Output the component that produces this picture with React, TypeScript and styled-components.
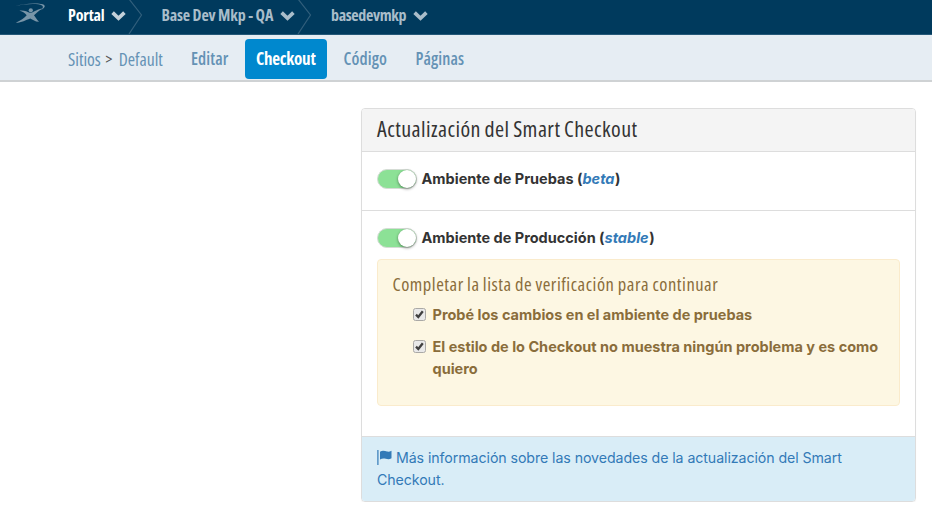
import React from "react";
import styled, { createGlobalStyle } from "styled-components";

const condensed = `font-family: "Open Sans", sans-serif; font-stretch: 75%;`;

const GlobalStyle = createGlobalStyle`
  * { box-sizing: border-box; }
  body {
    margin: 0;
    background: #fff;
    color: #333;
    font-family: Inter, "Liberation Sans", sans-serif;
    font-size: 14.5px;
    line-height: 22px;
  }
`;

const TopBar = styled.header`
  display: flex;
  height: 35px;
  background: #003a5d;
  border-bottom: 1px solid #245878;
`;

const LogoLink = styled.a`
  display: block;
  width: 68px;
  padding-left: 15px;
  svg { display: block; }
`;

const Crumb = styled.div<{ $active?: boolean; $width: number }>`
  ${condensed}
  display: flex;
  width: ${(p) => p.$width}px;
  height: 34px;
  white-space: nowrap;
  font-size: 16px;
  font-weight: 700;
  line-height: 31px;
  color: ${(p) => (p.$active ? "#fff" : "#a9bdca")};
`;

const CrumbText = styled.span<{ $width: number; $spacing: number }>`
  flex: none;
  width: ${(p) => p.$width}px;
  letter-spacing: ${(p) => p.$spacing}px;
`;

const Chevron = styled.svg`
  flex: none;
  width: 15px;
  height: 10px;
  margin: 11px 0 0 6px;
`;

const Separator = styled.svg`
  flex: none;
  width: 15px;
  height: 34px;
  margin-left: 2px;
`;

const SubBar = styled.nav`
  ${condensed}
  display: flex;
  height: 47px;
  padding: 4px 0 0 68px;
  background: #e6edf3;
  border-bottom: 2px solid #cfd2d4;
  font-size: 17px;
  line-height: 40px;
  white-space: nowrap;
`;

const Path = styled.div`
  display: flex;
  width: 112px;
  color: #6492b5;
  font-size: 17.7px;
`;

const PathPart = styled.span<{ $width: number; $dark?: boolean }>`
  flex: none;
  width: ${(p) => p.$width}px;
  ${(p) => p.$dark && "color: #555; font-size: 16px;"}
`;

const Tab = styled.a<{ $width: number; $active?: boolean }>`
  width: ${(p) => p.$width}px;
  height: 40px;
  margin-right: ${(p) => (p.$active ? 5.5 : 0)}px;
  padding-left: 11px;
  border-radius: 4px;
  font-weight: ${(p) => (p.$active ? 700 : 600)};
  letter-spacing: ${(p) => (p.$active ? -0.25 : 0.1)}px;
  color: ${(p) => (p.$active ? "#fff" : "#6492b5")};
  background: ${(p) => (p.$active ? "#0088ce" : "transparent")};
`;

const Panel = styled.section`
  width: 555px;
  height: 394px;
  margin: 26px 0 0 361px;
  overflow: hidden;
  border: 1px solid #ddd;
  border-radius: 4px;
  box-shadow: 0 1px 1px rgba(0, 0, 0, 0.05);
`;

const PanelHeading = styled.h1`
  ${condensed}
  height: 43px;
  margin: 0;
  padding-left: 15px;
  border-bottom: 1px solid #ddd;
  background: #f4f4f4;
  font-size: 22px;
  font-weight: 400;
  line-height: 39px;
  letter-spacing: 0.44px;
  word-spacing: -0.9px;
`;

const Section = styled.div<{ $height: number }>`
  height: ${(p) => p.$height}px;
  padding: 16px 15px 0;
  border-bottom: 1px solid #ddd;
`;

const SwitchRow = styled.label`
  display: flex;
  align-items: center;
  height: 22px;
  font-weight: 700;
`;

const Track = styled.span`
  display: flex;
  justify-content: flex-end;
  flex: none;
  width: 40px;
  height: 20px;
  margin-right: 4.5px;
  padding: 1px;
  border: 1px solid #d5dcd5;
  border-radius: 10px;
  background: #8ce196;
`;

const Knob = styled.span`
  width: 18px;
  height: 18px;
  margin-top: -1px;
  margin-right: -1px;
  border-radius: 50%;
  background: #fff;
  box-shadow: 0 1px 3px rgba(0, 0, 0, 0.45);
`;

const Channel = styled.em`
  color: #337ab7;
  margin-right: 0.5px;
`;

const Warning = styled.div`
  height: 147px;
  margin-top: 10px;
  padding: 13px 15px 0 14.5px;
  border: 1px solid #faebcc;
  border-radius: 4px;
  background: #fdf7e3;
  color: #8a6d3b;
`;

const WarningTitle = styled.h2`
  ${condensed}
  height: 24px;
  margin: 0;
  font-size: 18.5px;
  font-weight: 400;
  line-height: 22px;
  letter-spacing: 0.52px;
  word-spacing: -0.6px;
  white-space: nowrap;
`;

const Check = styled.label`
  display: flex;
  gap: 7px;
  margin: 7px 0 10px 20px;
  font-weight: 700;
`;

const CheckIcon = styled.svg`
  flex: none;
  width: 13px;
  height: 13px;
  margin-top: 4px;
`;

const Footer = styled.a`
  display: block;
  height: 65px;
  padding: 10px 15px;
  background: #d9edf7;
  color: #337ab7;
  font-size: 14.2px;
  letter-spacing: -0.08px;
`;

const Flag = styled.svg`
  width: 15px;
  height: 15px;
  margin-right: 4px;
  vertical-align: -2px;
`;

function Logo() {
  return (
    <svg width="32" height="25" viewBox="0 0 32 25" fill="#7895a8">
      <circle cx="15.8" cy="10.3" r="2.1" />
      <path d="M4.5 10.7C9 10 12 11.8 15.5 13.1C20 11.5 22.5 8.8 27.5 8.4C23.5 10.5 21.3 13 19 15.3C20.5 17 21.5 19.5 24 21.7C20 21.8 18 19.5 15.2 18.4C10.5 20 7 22.7 0.8 22.7C5.5 20.8 9.5 18.2 11.7 15.3C10 13.2 8 11.6 4.5 10.7Z" />
      <path d="M0 6C9 4 23 3 27 5.5C28.5 6.5 28 8 26 10.2C31 7 31 4.8 26 4C18 3 8 4 0 6Z" />
    </svg>
  );
}

function Down({ active }: { active?: boolean }) {
  return (
    <Chevron viewBox="0 0 15 10" fill="none">
      <path d="M1.6 1.7L7.5 7.3L13.4 1.7" stroke={active ? "#c3d1da" : "#a9bdca"} strokeWidth="3.7" />
    </Chevron>
  );
}

function Divider() {
  return (
    <Separator viewBox="0 0 15 34" fill="none">
      <path d="M1 -1L13.5 15L1 34" stroke="#315f7c" strokeWidth="1.2" />
    </Separator>
  );
}

function Switch({ label, channel }: { label: string; channel: string }) {
  return (
    <SwitchRow>
      <Track><Knob /></Track>
      <span>{label} (<Channel>{channel}</Channel>)</span>
    </SwitchRow>
  );
}

function Tick() {
  return (
    <CheckIcon viewBox="0 0 13 13">
      <rect x="0.5" y="0.5" width="12" height="12" rx="2" fill="#e9e9e9" stroke="#aaa9a6" />
      <path d="M3 6.6L5.3 9L9.8 3.2" fill="none" stroke="#404040" strokeWidth="2.3" />
    </CheckIcon>
  );
}

export default function App() {
  return (
    <>
      <GlobalStyle />
      <TopBar>
        <LogoLink><Logo /></LogoLink>
        <Crumb $active $width={93.5}>
          <CrumbText $width={37} $spacing={-0.18}>Portal</CrumbText><Down active /><Divider />
        </Crumb>
        <Crumb $width={169.5}>
          <CrumbText $width={112.5} $spacing={-0.18}>Base Dev Mkp - QA</CrumbText><Down /><Divider />
        </Crumb>
        <Crumb $width={110}>
          <CrumbText $width={76} $spacing={-0.35}>basedevmkp</CrumbText><Down />
        </Crumb>
      </TopBar>
      <SubBar>
        <Path>
          <PathPart $width={37.5}>Sitios</PathPart>
          <PathPart $width={13.2} $dark>&gt;</PathPart>
          <PathPart $width={50}>Default</PathPart>
        </Path>
        <Tab $width={65}>Editar</Tab>
        <Tab $width={82} $active>Checkout</Tab>
        <Tab $width={72}>Código</Tab>
        <Tab $width={70}>Páginas</Tab>
      </SubBar>
      <Panel>
        <PanelHeading>Actualización del Smart Checkout</PanelHeading>
        <Section $height={59}>
          <Switch label="Ambiente de Pruebas" channel="beta" />
        </Section>
        <Section $height={226}>
          <Switch label="Ambiente de Producción" channel="stable" />
          <Warning>
            <WarningTitle>Completar la lista de verificación para continuar</WarningTitle>
            <Check><Tick />Probé los cambios en el ambiente de pruebas</Check>
            <Check><Tick />El estilo de lo Checkout no muestra ningún problema y es como quiero</Check>
          </Warning>
        </Section>
        <Footer>
          <Flag viewBox="0 0 15 15" fill="#337ab7">
            <rect x="0.3" y="0" width="1.2" height="15" />
            <path d="M3 1.8C5.5 -0.2 8 1 10 1.6C11.7 2 13 1.5 14.5 0.7V8.3C12.5 9.6 10.8 9.5 8.8 8.8C6.5 8.1 5 8.3 3 9.5Z" />
          </Flag>
          Más información sobre las novedades de la actualización del Smart Checkout.
        </Footer>
      </Panel>
    </>
  );
}
